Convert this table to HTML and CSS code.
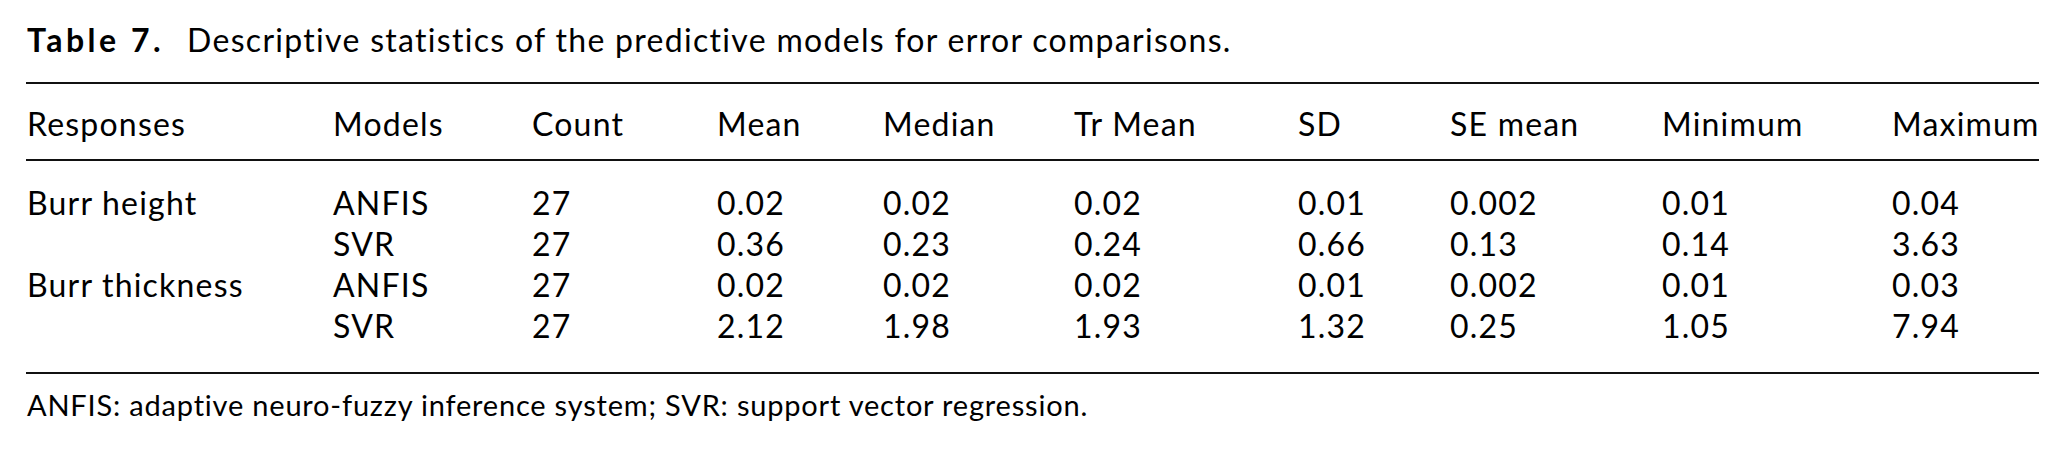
FILE: index.html
```html
<!DOCTYPE html>
<html lang="en">
<head>
<meta charset="utf-8">
<title>Table 7</title>
<link rel="stylesheet" href="styles.css">
</head>
<body>
<div class="page">
  <p class="caption"><b class="label">Table 7.</b>Descriptive statistics of the predictive models for error comparisons.</p>
  <table class="stats">
    <colgroup>
      <col class="c1"><col class="c2"><col class="c3"><col class="c4"><col class="c5">
      <col class="c6"><col class="c7"><col class="c8"><col class="c9"><col class="c10">
    </colgroup>
    <thead>
      <tr>
        <th>Responses</th><th>Models</th><th>Count</th><th>Mean</th><th>Median</th>
        <th>Tr Mean</th><th>SD</th><th>SE mean</th><th>Minimum</th><th>Maximum</th>
      </tr>
    </thead>
    <tbody>
      <tr><td>Burr height</td><td>ANFIS</td><td>27</td><td>0.02</td><td>0.02</td><td>0.02</td><td>0.01</td><td>0.002</td><td>0.01</td><td>0.04</td></tr>
      <tr><td></td><td>SVR</td><td>27</td><td>0.36</td><td>0.23</td><td>0.24</td><td>0.66</td><td>0.13</td><td>0.14</td><td>3.63</td></tr>
      <tr><td>Burr thickness</td><td>ANFIS</td><td>27</td><td>0.02</td><td>0.02</td><td>0.02</td><td>0.01</td><td>0.002</td><td>0.01</td><td>0.03</td></tr>
      <tr><td></td><td>SVR</td><td>27</td><td>2.12</td><td>1.98</td><td>1.93</td><td>1.32</td><td>0.25</td><td>1.05</td><td>7.94</td></tr>
    </tbody>
  </table>
  <p class="note">ANFIS: adaptive neuro-fuzzy inference system; SVR: support vector regression.</p>
</div>
</body>
</html>
```
FILE: styles.css
```css
html, body {
  margin: 0;
  padding: 0;
  background: #ffffff;
}
body {
  font-family: Lato, "Open Sans", "Liberation Sans", sans-serif;
  color: #000000;
}
.page {
  width: 2013px;
  padding: 0 0 0 26px;
}
.caption {
  margin: 19px 0 22px 1px;
  font-size: 32px;
  line-height: 41px;
  letter-spacing: 1.3px;
  white-space: nowrap;
}
.caption .label {
  font-weight: 700;
  letter-spacing: 3.5px;
  margin-right: 23px;
}
.stats {
  width: 2013px;
  border-collapse: collapse;
  table-layout: fixed;
  font-size: 32px;
  line-height: 41px;
  letter-spacing: 1.2px;
}
.c1 { width: 306px; }
.c2 { width: 199px; }
.c3 { width: 185px; }
.c4 { width: 166px; }
.c5 { width: 191px; }
.c6 { width: 224px; }
.c7 { width: 152px; }
.c8 { width: 212px; }
.c9 { width: 230px; }
.c10 { width: 148px; }
.stats th,
.stats td {
  text-align: left;
  font-weight: 400;
  padding: 0 0 0 1px;
  white-space: nowrap;
}
.stats thead th {
  border-top: 2px solid #111111;
  border-bottom: 2px solid #111111;
  padding-top: 19px;
  padding-bottom: 15px;
}
.stats tbody tr:first-child td {
  padding-top: 21px;
}
.stats tbody tr:last-child td {
  padding-bottom: 26px;
  border-bottom: 2px solid #111111;
}
.note {
  margin: 10px 0 0 1px;
  font-size: 29px;
  line-height: 41px;
  letter-spacing: 0.8px;
  white-space: nowrap;
}
```
